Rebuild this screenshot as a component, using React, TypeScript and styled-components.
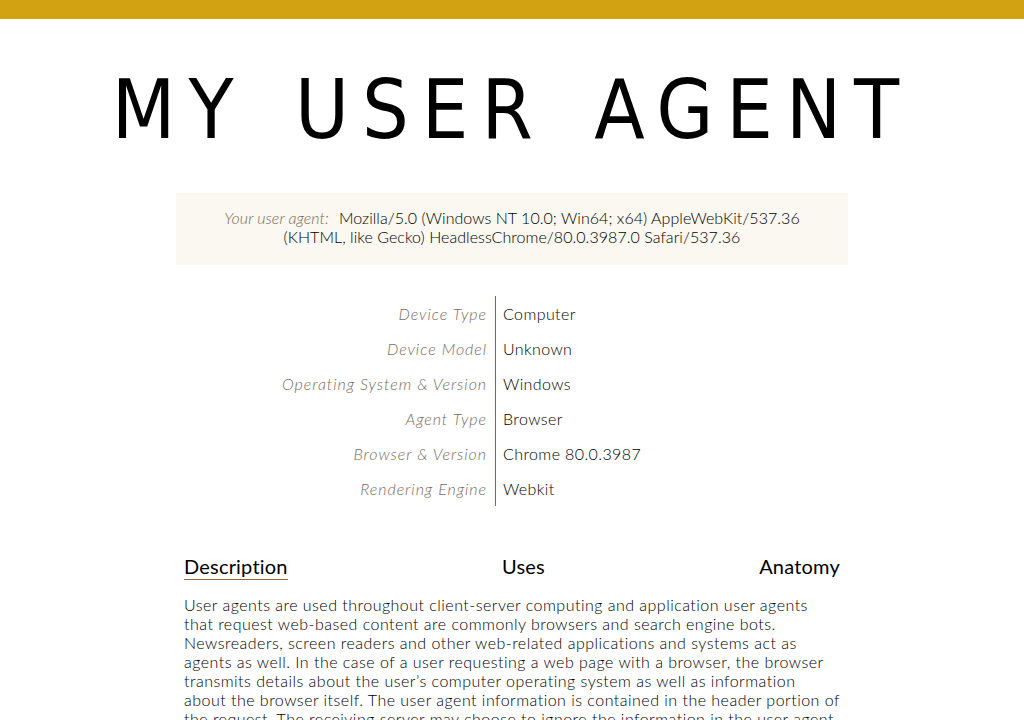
import * as React from 'react';
import styled, { createGlobalStyle } from 'styled-components';

const GlobalStyle = createGlobalStyle`
  html, body {
    margin: 0;
    padding: 0;
    background: #fff;
    font-family: Lato, "Open Sans", "Liberation Sans", sans-serif;
    font-weight: 300;
    color: #000;
  }
`;

const TopBar = styled.div`
  height: 19px;
  background-color: #d3a212;
`;

const Title = styled.h1`
  margin: 0;
  padding-top: 50px;
  height: 110px;
  text-align: center;
  font-family: "DejaVu Sans Condensed", "DejaVu Sans", sans-serif;
  font-weight: 400;
  font-size: 82px;
  line-height: 1;
  letter-spacing: 13px;
  word-spacing: 12px;
  color: #000;
`;

const Main = styled.main`
  width: 672px;
  margin: 0 auto;
  padding-top: 14px;
`;

const AgentBox = styled.div`
  background-color: #faf8f0;
  padding: 15px 20px 19px;
  text-align: center;
  font-size: 16px;
  line-height: 19px;
  letter-spacing: 0.05px;
  color: #000;
`;

const AgentLabel = styled.em`
  display: inline-block;
  color: #776d60;
  padding-right: 2px;
  margin-right: 8px;
`;

const InfoTable = styled.div`
  display: grid;
  grid-template-columns: 320px 1fr;
  margin-top: 31px;
`;

const InfoLabel = styled.div`
  text-align: right;
  font-style: italic;
  color: #776d60;
  font-size: 16px;
  line-height: 35px;
  letter-spacing: 0.95px;
  padding-right: 8px;
  border-right: 1px solid #8b6a2e;
`;

const InfoValue = styled.div`
  font-size: 16px;
  line-height: 35px;
  letter-spacing: 0.4px;
  padding-left: 7px;
  color: #000;
`;

const Tabs = styled.nav`
  display: flex;
  justify-content: space-between;
  margin-top: 48px;
  padding: 0 8px;
`;

const Tab = styled.span<{ $active?: boolean }>`
  font-size: 20px;
  font-weight: 400;
  line-height: 24px;
  letter-spacing: 0.2px;
  padding-bottom: 1px;
  color: #000;
  border-bottom: 1px solid ${(p) => (p.$active ? '#8b6a2e' : 'transparent')};
`;

const Body = styled.p`
  margin: 15px 0 0;
  padding: 0 8px;
  font-size: 16px;
  line-height: 19px;
  letter-spacing: 0.48px;
  color: #000;
`;

const info: [string, string][] = [
  ['Device Type', 'Computer'],
  ['Device Model', 'Unknown'],
  ['Operating System & Version', 'Windows'],
  ['Agent Type', 'Browser'],
  ['Browser & Version', 'Chrome 80.0.3987'],
  ['Rendering Engine', 'Webkit'],
];

export default function App() {
  return (
    <>
      <GlobalStyle />
      <TopBar />
      <Title>MY USER AGENT</Title>
      <Main>
        <AgentBox>
          <AgentLabel>Your user agent:</AgentLabel>
          Mozilla/5.0 (Windows NT 10.0; Win64; x64) AppleWebKit/537.36 (KHTML, like Gecko)
          HeadlessChrome/80.0.3987.0 Safari/537.36
        </AgentBox>
        <InfoTable>
          {info.map(([label, value]) => (
            <React.Fragment key={label}>
              <InfoLabel>{label}</InfoLabel>
              <InfoValue>{value}</InfoValue>
            </React.Fragment>
          ))}
        </InfoTable>
        <Tabs>
          <Tab $active>Description</Tab>
          <Tab>Uses</Tab>
          <Tab>Anatomy</Tab>
        </Tabs>
        <Body>
          User agents are used throughout client-server computing and application user agents
          that request web-based content are commonly browsers and search engine bots.
          Newsreaders, screen readers and other web-related applications and systems act as
          agents as well. In the case of a user requesting a web page with a browser, the browser
          transmits details about the user’s computer operating system as well as information
          about the browser itself. The user agent information is contained in the header portion of
          the request. The receiving server may choose to ignore the information in the user agent
          string or use it to deliver content tailored to the browser and device.
        </Body>
      </Main>
    </>
  );
}
